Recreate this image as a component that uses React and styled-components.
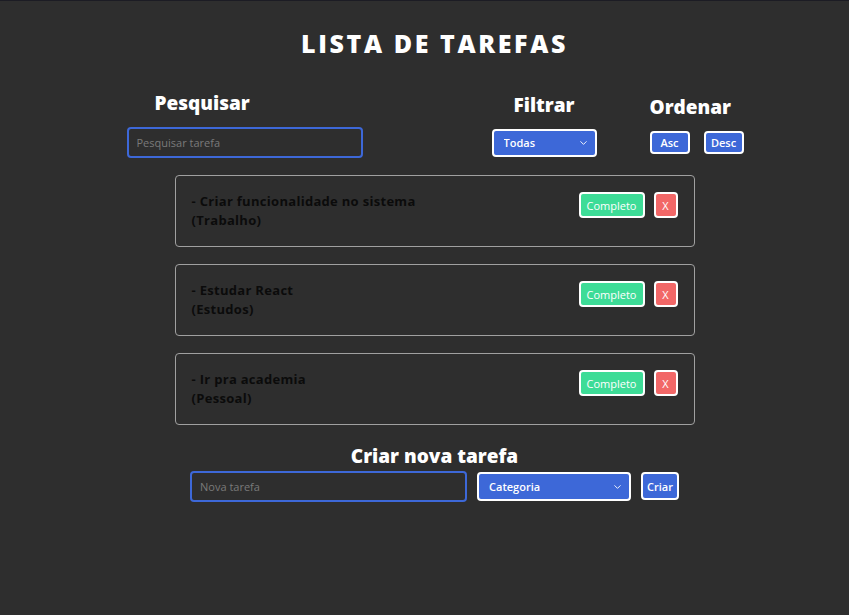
import styled, { createGlobalStyle } from 'styled-components'
import { ChevronDown } from 'lucide-react'

const GlobalStyle = createGlobalStyle`
  * { box-sizing: border-box; }
  html, body {
    margin: 0;
    background: #2e2e2e;
  }
  body {
    font-family: "Open Sans", "DejaVu Sans", sans-serif;
    color: #fff;
    min-height: 615px;
    border-top: 1px solid #1c1c24;
  }
`

const todos = [
  { id: 1, text: 'Criar funcionalidade no sistema', category: 'Trabalho' },
  { id: 2, text: 'Estudar React', category: 'Estudos' },
  { id: 3, text: 'Ir pra academia', category: 'Pessoal' },
]

const Page = styled.div`
  display: flex;
  flex-direction: column;
  align-items: center;
  padding: 27px 0 40px 20px;
`

const Title = styled.h1`
  margin: 0;
  font-size: 25px;
  line-height: 30px;
  font-weight: 800;
  letter-spacing: 2.6px;
  text-transform: uppercase;
`

const Toolbar = styled.div`
  display: flex;
  align-items: center;
  margin-top: 33px;
`

const Group = styled.div`
  display: flex;
  flex-direction: column;
  align-items: ${({ $align }) => $align || 'center'};
  width: ${({ $width }) => $width}px;
  margin-left: ${({ $gap }) => $gap || 0}px;
`

const Heading = styled.h2`
  margin: 0 0 12px ${({ $indent }) => $indent || 0}px;
  font-size: 19px;
  line-height: 24px;
  font-weight: 800;
`

const TextInput = styled.input`
  width: ${({ $width }) => $width}px;
  height: 31px;
  padding: 0 8px;
  background: #2e2e2e;
  border: 2px solid #3d68d8;
  border-radius: 4px;
  color: #fff;
  font-family: inherit;
  font-size: 11px;
  outline: none;

  &::placeholder {
    color: #7a7a7a;
  }
`

const SelectBox = styled.div`
  position: relative;
  width: ${({ $width }) => $width}px;
  height: ${({ $height }) => $height}px;

  & svg {
    position: absolute;
    right: 8px;
    top: 50%;
    transform: translateY(-50%);
    pointer-events: none;
    color: #fff;
  }
`

const Select = styled.select`
  appearance: none;
  width: 100%;
  height: 100%;
  padding: 0 10px;
  background: #3d68d8;
  border: 2px solid #fff;
  border-radius: 4px;
  color: #fff;
  font-family: inherit;
  font-size: 11px;
  font-weight: 600;
  outline: none;
`

const Buttons = styled.div`
  display: flex;
  gap: ${({ $gap }) => $gap}px;
`

const Button = styled.button`
  height: ${({ $height }) => $height || 26}px;
  min-width: ${({ $width }) => $width}px;
  padding: 0 4px;
  background: ${({ $color }) => $color || '#3d68d8'};
  border: 2px solid #fff;
  border-radius: 4px;
  color: #fff;
  font-family: inherit;
  font-size: 11px;
  font-weight: ${({ $weight }) => $weight || 600};
  cursor: pointer;
`

const List = styled.div`
  display: flex;
  flex-direction: column;
  gap: 17px;
  margin-top: 17px;
`

const Card = styled.div`
  display: flex;
  justify-content: space-between;
  align-items: flex-start;
  width: 520px;
  height: 72px;
  padding: 16px;
  border: 1px solid #a0a0a0;
  border-radius: 4px;
`

const TaskText = styled.p`
  margin: 0;
  font-size: 13px;
  line-height: 19px;
  font-weight: 700;
  letter-spacing: 0.3px;
  color: #0b0b0b;
`

const CreateHeading = styled(Heading)`
  margin: 19px 0 3px;
`

const Form = styled.form`
  display: flex;
  align-items: flex-start;
  gap: 10px;

  & > :not(:first-child) {
    margin-top: 1px;
  }
`

export default function App() {
  return (
    <>
      <GlobalStyle />
      <Page>
        <Title>Lista de Tarefas</Title>

        <Toolbar>
          <Group $width={236} $align="flex-start">
            <Heading $indent={28}>Pesquisar</Heading>
            <TextInput $width={236} placeholder="Pesquisar tarefa" />
          </Group>
          <Group $width={105} $gap={129}>
            <Heading>Filtrar</Heading>
            <SelectBox $width={105} $height={28}>
              <Select defaultValue="All">
                <option value="All">Todas</option>
                <option value="Completed">Completas</option>
                <option value="Incomplete">Incompletas</option>
              </Select>
              <ChevronDown size={11} strokeWidth={2} />
            </SelectBox>
          </Group>
          <Group $width={93} $gap={53} $align="flex-start">
            <Heading>Ordenar</Heading>
            <Buttons $gap={14}>
              <Button $width={40} $height={23}>Asc</Button>
              <Button $width={40} $height={23}>Desc</Button>
            </Buttons>
          </Group>
        </Toolbar>

        <List>
          {todos.map((todo) => (
            <Card key={todo.id}>
              <TaskText>
                - {todo.text}
                <br />({todo.category})
              </TaskText>
              <Buttons $gap={9}>
                <Button $width={66} $color="#3ddc97" $weight={400}>Completo</Button>
                <Button $width={24} $color="#f26767" $weight={400}>X</Button>
              </Buttons>
            </Card>
          ))}
        </List>

        <CreateHeading>Criar nova tarefa</CreateHeading>
        <Form onSubmit={(e) => e.preventDefault()}>
          <TextInput $width={277} placeholder="Nova tarefa" />
          <SelectBox $width={154} $height={29}>
            <Select defaultValue="">
              <option value="">Categoria</option>
              <option value="Trabalho">Trabalho</option>
              <option value="Pessoal">Pessoal</option>
              <option value="Estudos">Estudos</option>
            </Select>
            <ChevronDown size={11} strokeWidth={2} />
          </SelectBox>
          <Button $width={37} $height={28}>Criar</Button>
        </Form>
      </Page>
    </>
  )
}
